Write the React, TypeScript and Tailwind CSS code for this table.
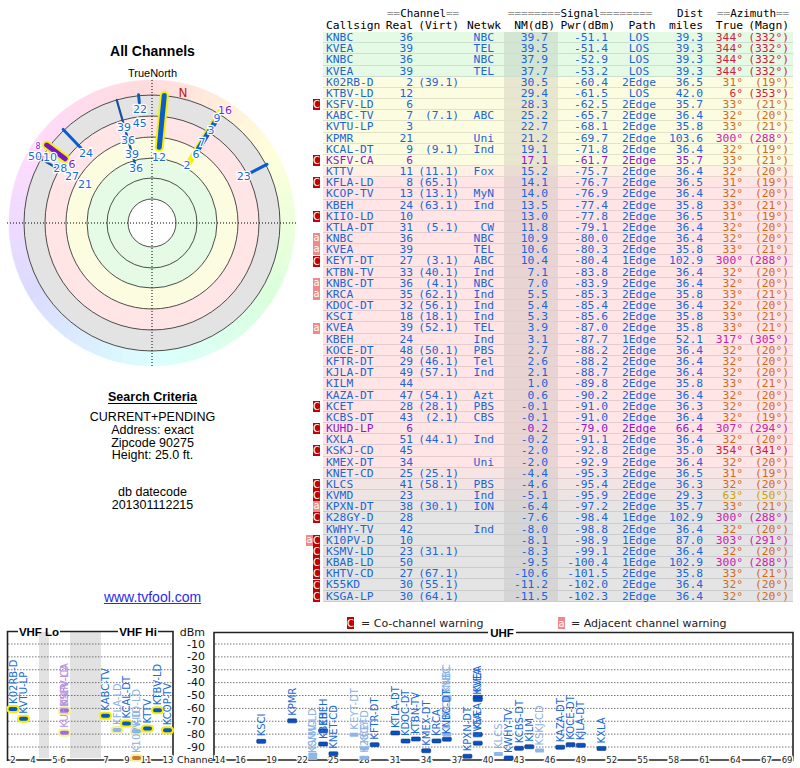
import React from "react";

// one line per station: badge|call|real|virt|netwk|nm|pwr|path|dist|true|magn|flag
const raw = [
  "|KNBC|36||NBC|39.7|-51.1|LOS|39.3|344|332",
  "|KVEA|39||TEL|39.5|-51.4|LOS|39.3|344|332",
  "|KNBC|36||NBC|37.9|-52.9|LOS|39.3|344|332",
  "|KVEA|39||TEL|37.7|-53.2|LOS|39.3|344|332",
  "|K02RB-D|2|(39.1)||30.5|-60.4|2Edge|36.5|31|19",
  "|KTBV-LD|12|||29.4|-61.5|LOS|42.0|6|353",
  "C|KSFV-LD|6|||28.3|-62.5|2Edge|35.7|33|21",
  "|KABC-TV|7|(7.1)|ABC|25.2|-65.7|2Edge|36.4|32|20",
  "|KVTU-LP|3|||22.7|-68.1|2Edge|35.8|33|21",
  "|KPMR|21||Uni|21.2|-69.7|2Edge|103.6|300|288",
  "|KCAL-DT|9|(9.1)|Ind|19.1|-71.8|2Edge|36.4|32|19",
  "C|KSFV-CA|6|||17.1|-61.7|2Edge|35.7|33|21|p",
  "|KTTV|11|(11.1)|Fox|15.2|-75.7|2Edge|36.4|32|20",
  "C|KFLA-LD|8|(65.1)||14.1|-76.7|2Edge|36.5|31|19",
  "|KCOP-TV|13|(13.1)|MyN|14.0|-76.9|2Edge|36.4|32|20",
  "|KBEH|24|(63.1)|Ind|13.5|-77.4|2Edge|35.8|33|21",
  "C|KIIO-LD|10|||13.0|-77.8|2Edge|36.5|31|19",
  "|KTLA-DT|31|(5.1)|CW|11.8|-79.1|2Edge|36.4|32|20",
  "a|KNBC|36||NBC|10.9|-80.0|2Edge|36.4|32|20",
  "a|KVEA|39||TEL|10.6|-80.3|2Edge|35.8|33|21",
  "C|KEYT-DT|27|(3.1)|ABC|10.4|-80.4|1Edge|102.9|300|288",
  "|KTBN-TV|33|(40.1)|Ind|7.1|-83.8|2Edge|36.4|32|20",
  "a|KNBC-DT|36|(4.1)|NBC|7.0|-83.9|2Edge|36.4|32|20",
  "a|KRCA|35|(62.1)|Ind|5.5|-85.3|2Edge|35.8|33|21",
  "|KDOC-DT|32|(56.1)|Ind|5.4|-85.4|2Edge|36.4|32|20",
  "|KSCI|18|(18.1)|Ind|5.3|-85.6|2Edge|35.8|33|21",
  "a|KVEA|39|(52.1)|TEL|3.9|-87.0|2Edge|35.8|33|21",
  "|KBEH|24||Ind|3.1|-87.7|1Edge|52.1|317|305",
  "|KOCE-DT|48|(50.1)|PBS|2.7|-88.2|2Edge|36.4|32|20",
  "|KFTR-DT|29|(46.1)|Tel|2.6|-88.2|2Edge|36.4|32|20",
  "|KJLA-DT|49|(57.1)|Ind|2.1|-88.7|2Edge|36.4|32|20",
  "|KILM|44|||1.0|-89.8|2Edge|35.8|33|21",
  "|KAZA-DT|47|(54.1)|Azt|0.6|-90.2|2Edge|36.4|32|20",
  "C|KCET|28|(28.1)|PBS|-0.1|-91.0|2Edge|36.3|32|20",
  "|KCBS-DT|43|(2.1)|CBS|-0.1|-91.0|2Edge|36.4|32|19",
  "C|KUHD-LP|6|||-0.2|-79.0|2Edge|66.4|307|294|p",
  "|KXLA|51|(44.1)|Ind|-0.2|-91.1|2Edge|36.4|32|20",
  "C|KSKJ-CD|45|||-2.0|-92.8|2Edge|35.0|354|341",
  "|KMEX-DT|34||Uni|-2.0|-92.9|2Edge|36.4|32|20",
  "|KNET-CD|25|(25.1)||-4.4|-95.3|2Edge|36.5|31|19",
  "C|KLCS|41|(58.1)|PBS|-4.6|-95.4|2Edge|36.3|32|20",
  "C|KVMD|23||Ind|-5.1|-95.9|2Edge|29.3|63|50",
  "a|KPXN-DT|38|(30.1)|ION|-6.4|-97.2|2Edge|35.7|33|21",
  "C|K28GY-D|28|||-7.6|-98.4|1Edge|102.9|300|288",
  "|KWHY-TV|42||Ind|-8.0|-98.8|2Edge|36.4|32|20",
  "aC|K10PV-D|10|||-8.1|-98.9|1Edge|87.0|303|291",
  "C|KSMV-LD|23|(31.1)||-8.3|-99.1|2Edge|36.4|32|20",
  "C|KBAB-LD|50|||-9.5|-100.4|1Edge|102.9|300|288",
  "C|KHTV-CD|27|(67.1)||-10.6|-101.5|2Edge|35.8|33|21",
  "C|K55KD|30|(55.1)||-11.2|-102.0|2Edge|36.4|32|20",
  "C|KSGA-LP|30|(64.1)||-11.5|-102.3|2Edge|36.4|32|20",
];

const rows = raw.map((s) => {
  const [badge, call, real, virt, net, nm, pwr, path, dist, tru, magn, flag] = s.split("|");
  return { badge, call, real, virt, net, nm, pwr, path, dist, tru: Number(tru), magn, purple: flag === "p" };
});

const rowBg = (nm: number) => {
  if (nm >= 35) return { row: "bg-[#e5fae5]", col: "bg-[#d3e6d3]" };
  if (nm >= 16) return { row: "bg-[#fcfce0]", col: "bg-[#e9e6cf]" };
  if (nm >= 15) return { row: "bg-[#fff0e5]", col: "bg-[#eadcd3]" };
  if (nm >= -3) return { row: "bg-[#ffe5e5]", col: "bg-[#e9d4d4]" };
  if (nm >= -4.5) return { row: "bg-[#f7e4e4]", col: "bg-[#e3d4d4]" };
  if (nm >= -4.8) return { row: "bg-[#f3e4e4]", col: "bg-[#e0d4d4]" };
  if (nm >= -5.5) return { row: "bg-[#eee4e4]", col: "bg-[#dcd4d4]" };
  if (nm >= -7) return { row: "bg-[#e9e4e4]", col: "bg-[#d9d4d4]" };
  return { row: "bg-[#e4e4e4]", col: "bg-[#d5d5d5]" };
};

const azColor = (az: number) => {
  if (az >= 340 || az <= 10) return "text-[#d41a3c]";
  if (az < 45) return "text-[#d2691e]";
  if (az < 90) return "text-[#c9a400]";
  return "text-[#cc22aa]";
};

// polar chart
const CX = 152;
const CY = 143;
const rad = (a: number) => (a * Math.PI) / 180;
const P = (a: number, r: number) => ({ x: CX + r * Math.sin(rad(a)), y: CY - r * Math.cos(rad(a)) });

const wedge = (a0: number, a1: number, r: number) => {
  const p0 = P(a0, r);
  const p1 = P(a1, r);
  return `M${CX} ${CY} L${p0.x} ${p0.y} A${r} ${r} 0 0 1 ${p1.x} ${p1.y} Z`;
};

const bars = [
  { a: 31.5, r1: 71, r2: 134, w: 6, c: "#f5f200", halo: false },
  { a: 5.5, r1: 76, r2: 128, w: 5, c: "#0b5ccc", halo: true },
  { a: 344, r1: 62, r2: 128, w: 2.2, c: "#1b4f9c", halo: false },
  { a: 354, r1: 121, r2: 129, w: 3, c: "#0b5ccc", halo: false },
  { a: 316.5, r1: 103, r2: 129, w: 3, c: "#0b5ccc", halo: false },
  { a: 300, r1: 110, r2: 133, w: 2.5, c: "#1b4f9c", halo: false },
  { a: 306.5, r1: 108, r2: 131, w: 5, c: "#7a14cc", halo: true },
  { a: 63, r1: 111, r2: 129, w: 3.2, c: "#0b5ccc", halo: false },
  { a: 32, r1: 88, r2: 126, w: 5, c: "#0b5ccc", halo: false },
];

const polarLabels: [string, number, number, string, number][] = [
  ["12", 6, 66, "#1a6ad8", 11],
  ["39", 343.7, 100, "#1a6ad8", 11],
  ["36", 343.8, 86.4, "#1a6ad8", 11],
  ["39", 343.6, 71, "#1a6ad8", 11],
  ["36", 343.8, 57, "#1a6ad8", 11],
  ["22", 354, 114.6, "#1a6ad8", 11],
  ["45", 353, 100.7, "#1a6ad8", 11],
  ["24", 316.3, 95.5, "#1a6ad8", 11],
  ["8", 303.7, 137, "#8a16d6", 8],
  ["50", 299.8, 134.8, "#1a6ad8", 11],
  ["10", 302.9, 121.5, "#1a6ad8", 11],
  ["28", 300.9, 107, "#1a6ad8", 11],
  ["6", 306, 98.8, "#8a16d6", 11],
  ["27", 299.9, 92.3, "#1a6ad8", 11],
  ["21", 299.6, 77, "#1a6ad8", 11],
  ["23", 62.9, 103, "#1a6ad8", 11],
  ["16", 32.9, 134.5, "#8a16d6", 11],
  ["9", 31.8, 123.5, "#1a6ad8", 11],
  ["3", 32.4, 110, "#1a6ad8", 11],
  ["7", 31.7, 95, "#1a6ad8", 11],
  ["6", 32.9, 81, "#1a6ad8", 11],
  ["2", 31.1, 67.7, "#1a6ad8", 11],
];

const Polar = () => (
  <svg width={305} height={290} className="block">
    {Array.from({ length: 72 }, (_, i) => (
      <path
        key={i}
        d={wedge(i * 5 - 2.5, i * 5 + 2.5, 143)}
        fill={`hsl(${i * 5},100%,93%)`}
        stroke={`hsl(${i * 5},100%,93%)`}
        strokeWidth={0.6}
      />
    ))}
    <circle cx={CX} cy={CY} r={128} fill="#e3e3e3" />
    <circle cx={CX} cy={CY} r={107} fill="#ffe5e5" />
    <circle cx={CX} cy={CY} r={86} fill="#fcfce0" />
    <circle cx={CX} cy={CY} r={65} fill="#e5fbe5" />
    <circle cx={CX} cy={CY} r={24} fill="#ffffff" />
    {[24, 45, 65, 86, 107, 128].map((r) => (
      <circle key={r} cx={CX} cy={CY} r={r} fill="none" stroke="#3a3a3a" strokeWidth={0.9} />
    ))}
    <line x1={CX} y1={0} x2={CX} y2={CY + 144} stroke="#000" strokeWidth={1} strokeDasharray="1 2" />
    <line x1={7} y1={CY} x2={297} y2={CY} stroke="#000" strokeWidth={1} strokeDasharray="1 2" />
    {bars.map((b, i) => {
      const p1 = P(b.a, b.r1);
      const p2 = P(b.a, b.r2);
      return (
        <g key={i}>
          {b.halo && (
            <line x1={p1.x} y1={p1.y} x2={p2.x} y2={p2.y} stroke="#f5f200" strokeWidth={b.w + 4} strokeLinecap="round" />
          )}
          <line x1={p1.x} y1={p1.y} x2={p2.x} y2={p2.y} stroke={b.c} strokeWidth={b.w} strokeLinecap="round" />
        </g>
      );
    })}
    {(() => {
      const n = P(13.4, 133.6);
      return (
        <text x={n.x} y={n.y} fill="#d01010" fontSize={12} fontFamily="DejaVu Sans" textAnchor="middle" dominantBaseline="central">
          N
        </text>
      );
    })()}
    {polarLabels.map(([t, a, r, c, fs], i) => {
      const p = P(a, r);
      return (
        <text
          key={i}
          x={p.x}
          y={p.y}
          fill={c}
          fontSize={fs}
          fontFamily="DejaVu Sans"
          textAnchor="middle"
          dominantBaseline="central"
          stroke="#ffffff"
          strokeWidth={2.5}
          paintOrder="stroke"
        >
          {t}
        </text>
      );
    })}
  </svg>
);

// bottom charts, drawn in page coordinates
const yOf = (d: number) => 644 + (-10 - d) * 1.2875;
const ux = (c: number) => 220 + (c - 14) * 10.31;

const vhf: [number, number, string, string][] = [
  [13, -60.4, "K02RB-D", "blue"],
  [23.5, -68.1, "KVTU-LP", "blue"],
  [64.5, -62.5, "KSFV-LD", "purple"],
  [64.5, -61.7, "KSFV-CA", "purple"],
  [64.5, -79.0, "KUHD-LP", "purple"],
  [105.5, -65.7, "KABC-TV", "blue"],
  [117, -76.7, "KFLA-LD", "light"],
  [126.5, -71.8, "KCAL-DT", "blue"],
  [136.5, -77.8, "KIIO-LD", "light"],
  [136.5, -98.9, "K10PV-D", "orange"],
  [147.5, -75.7, "KTTV", "blue"],
  [157.5, -61.5, "KTBV-LD", "blue"],
  [167.5, -76.9, "KCOP-TV", "blue"],
];

const uhf: [number, number, string, boolean][] = [
  [18, -85.6, "KSCI", false],
  [21, -69.7, "KPMR", false],
  [23, -95.9, "KVMD", true],
  [23, -99.1, "KSMV-LD", true],
  [24, -77.4, "KBEH", false],
  [24, -87.7, "KBEH", false],
  [25, -95.3, "KNET-CD", false],
  [27, -80.4, "KEYT-DT", true],
  [28, -91.0, "KCET", true],
  [28, -98.4, "K28GY-D", true],
  [29, -88.2, "KFTR-DT", false],
  [31, -79.1, "KTLA-DT", false],
  [32, -85.4, "KDOC-DT", false],
  [33, -83.8, "KTBN-TV", false],
  [34, -92.9, "KMEX-DT", false],
  [35, -85.3, "KRCA", false],
  [36, -51.1, "KNBC", true],
  [36, -52.9, "KNBC", true],
  [36, -80.0, "KNBC", true],
  [36, -83.9, "KNBC-DT", false],
  [38, -97.2, "KPXN-DT", false],
  [39, -51.4, "KVEA", false],
  [39, -53.2, "KVEA", false],
  [39, -80.3, "KVEA", false],
  [39, -87.0, "KVEA", false],
  [41, -95.4, "KLCS", true],
  [42, -98.8, "KWHY-TV", false],
  [43, -91.0, "KCBS-DT", false],
  [44, -89.8, "KILM", false],
  [45, -92.8, "KSKJ-CD", true],
  [47, -90.2, "KAZA-DT", false],
  [48, -88.2, "KOCE-DT", false],
  [49, -88.7, "KJLA-DT", false],
  [51, -91.1, "KXLA", false],
];

const vhfTicks: [string, number][] = [
  ["2", 13], ["4", 33], ["5", 55], ["6", 63], ["7", 106], ["9", 127], ["11", 146], ["13", 168],
];
const uhfTicks = [14, 16, 19, 22, 25, 28, 31, 34, 37, 40, 43, 46, 49, 52, 55, 58, 61, 64, 67, 69];

const labelFill: Record<string, string> = {
  blue: "#1a6ad8",
  light: "#8ab2e4",
  purple: "#b894e0",
  orange: "#8ab2e4",
};
const pillFill: Record<string, string> = {
  blue: "#0a55c8",
  light: "#8eb6e6",
  purple: "#a070d0",
  orange: "#c87830",
};

const Charts = () => (
  <svg width={800} height={153} viewBox="0 615 800 153" className="block" fontFamily="DejaVu Sans">
    {/* legend */}
    <rect x={347} y={617} width={7} height={12} fill="#c40000" />
    <text x={350.5} y={623.5} fill="#fff" fontSize={10} textAnchor="middle" dominantBaseline="central">C</text>
    <text x={361} y={623.5} fill="#222" fontSize={11} dominantBaseline="central">= Co-channel warning</text>
    <rect x={558} y={617} width={7} height={12} fill="#f08a8a" />
    <text x={561.5} y={623} fill="#fff" fontSize={10} textAnchor="middle" dominantBaseline="central">a</text>
    <text x={571} y={623.5} fill="#222" fontSize={11} dominantBaseline="central">= Adjacent channel warning</text>

    {/* grey gaps */}
    <rect x={39} y={632} width={10} height={126} fill="#e2e2e2" />
    <rect x={70} y={632} width={31} height={126} fill="#e2e2e2" />

    {/* grid */}
    {Array.from({ length: 9 }, (_, i) => {
      const y = yOf(-10 * (i + 1));
      return (
        <g key={i}>
          <line x1={8} y1={y} x2={172} y2={y} stroke="#555" strokeWidth={0.8} strokeDasharray="1.5 1.5" />
          <line x1={215} y1={y} x2={792} y2={y} stroke="#555" strokeWidth={0.8} strokeDasharray="1.5 1.5" />
          <text x={205} y={y} fontSize={11} fill="#111" textAnchor="end" dominantBaseline="central">
            {`-${(i + 1) * 10}`}
          </text>
        </g>
      );
    })}
    <text x={205} y={632} fontSize={11} fill="#111" textAnchor="end" dominantBaseline="central">dBm</text>
    <text x={177} y={759.5} fontSize={9.5} fill="#111" dominantBaseline="central">Channel</text>

    {/* frames */}
    <path d="M18 631.5 H7.5 V761" fill="none" stroke="#222" strokeWidth={1.6} />
    <path d="M60 631.5 H118" fill="none" stroke="#222" strokeWidth={1.6} />
    <path d="M158 631.5 H173 V761" fill="none" stroke="#222" strokeWidth={1.6} />
    <line x1={7} y1={760} x2={173} y2={760} stroke="#222" strokeWidth={1.4} />
    <text x={39} y={632} fontSize={11.5} fontWeight="bold" fontFamily="Liberation Sans" textAnchor="middle" dominantBaseline="central">VHF Lo</text>
    <text x={138} y={632} fontSize={11.5} fontWeight="bold" fontFamily="Liberation Sans" textAnchor="middle" dominantBaseline="central">VHF Hi</text>

    <path d="M214 761 V632.5 H488" fill="none" stroke="#222" strokeWidth={1.6} />
    <path d="M516 632.5 H793 V761" fill="none" stroke="#222" strokeWidth={1.6} />
    <line x1={214} y1={760} x2={793} y2={760} stroke="#222" strokeWidth={1.4} />
    <text x={502} y={633} fontSize={11.5} fontWeight="bold" fontFamily="Liberation Sans" textAnchor="middle" dominantBaseline="central">UHF</text>

    {/* axis ticks */}
    {vhfTicks.map(([t, x]) => (
      <text key={t} x={x} y={760} fontSize={8.5} fill="#222" textAnchor="middle" dominantBaseline="central" stroke="#fff" strokeWidth={3} paintOrder="stroke">
        {t}
      </text>
    ))}
    {uhfTicks.map((c) => (
      <text key={c} x={ux(c)} y={760} fontSize={8.5} fill="#222" textAnchor="middle" dominantBaseline="central" stroke="#fff" strokeWidth={3} paintOrder="stroke">
        {c}
      </text>
    ))}

    {/* vhf stations */}
    {vhf.map(([x, d, name, kind], i) => {
      const y = Math.min(yOf(d), 758);
      return (
        <g key={i}>
          <text x={x + 3.6} y={y - 5} fontSize={10} fill={labelFill[kind]} transform={`rotate(-90 ${x + 3.6} ${y - 5})`}>
            {name}
          </text>
          <rect x={x - 5.5} y={y - 3} width={11} height={6} rx={3} fill={pillFill[kind]} stroke={kind === "blue" ? "#f4ef00" : "#f4f0a0"} strokeWidth={2} />
        </g>
      );
    })}

    {/* uhf stations */}
    {uhf.map(([c, d, name, light], i) => {
      const x = ux(c);
      const y = Math.min(yOf(d), 758);
      return (
        <g key={i}>
          <text x={x + 3.6} y={y - 5} fontSize={10} fill={light ? "#8ab2e4" : "#1a6ad8"} transform={`rotate(-90 ${x + 3.6} ${y - 5})`}>
            {name}
          </text>
          <rect x={x - 4.5} y={y - 2} width={9} height={4} rx={1} fill={light ? "#8eb6e6" : "#0a50c0"} stroke={light ? "none" : "#07357f"} strokeWidth={0.6} />
        </g>
      );
    })}
  </svg>
);

const Badge = ({ k }: { k: string }) =>
  k === "C" ? (
    <span className="w-[7px] h-[11px] bg-[#c40000] text-white text-[10px] leading-[11px] text-center font-['DejaVu_Sans',sans-serif]">C</span>
  ) : (
    <span className="w-[7px] h-[11px] bg-[#f08a8a] text-white text-[10px] leading-[10px] text-center font-['DejaVu_Sans',sans-serif]">a</span>
  );

const App = () => {
  return (
    <div className="w-[800px] h-[768px] bg-white overflow-hidden text-black">
      <div className="flex h-[615px]">
        <div className="w-[305px] flex flex-col items-center font-['Liberation_Sans',Arial,sans-serif]">
          <div className="pt-[43px] text-[14px] leading-[16px] font-bold">All Channels</div>
          <div className="mt-[8px] text-[11px] leading-[13px]">TrueNorth</div>
          <Polar />
          <div className="mt-[20px] text-[12.5px] leading-[15px] font-bold underline underline-offset-2">Search Criteria</div>
          <div className="mt-[6px] text-[12.5px] leading-[12.8px] text-center">
            <div>CURRENT+PENDING</div>
            <div>Address: exact</div>
            <div>Zipcode 90275</div>
            <div>Height: 25.0 ft.</div>
          </div>
          <div className="mt-[24px] text-[12.5px] leading-[12.8px] text-center">
            <div>db datecode</div>
            <div>201301112215</div>
          </div>
          <a className="mt-[77px] text-[14px] leading-[16px] text-[#2a2aee] underline">www.tvfool.com</a>
        </div>

        <div className="w-[488px] font-['DejaVu_Sans_Mono',monospace] text-[11.3px] whitespace-nowrap">
          <div className="pt-[8px] pl-[18px]">
            <div className="flex h-[11px] leading-[11px] text-[10.9px]">
              <span className="w-[64px]" />
              <span className="w-[72px]">
                <span className="text-[#9a9a9a]">==</span>Channel<span className="text-[#9a9a9a]">==</span>
              </span>
              <span className="w-[49px]" />
              <span className="w-[146px]">
                <span className="text-[#9a9a9a]">========</span>Signal<span className="text-[#9a9a9a]">========</span>
              </span>
              <span className="w-[23px]" />
              <span className="w-[26px] text-right">Dist</span>
              <span className="w-[14px]" />
              <span className="w-[72px]">
                <span className="text-[#9a9a9a]">==</span>Azimuth<span className="text-[#9a9a9a]">==</span>
              </span>
            </div>
            <div className="flex h-[12px] mt-[1px] leading-[12px]">
              <span className="w-[60px] pl-[3px]">Callsign</span>
              <span className="w-[30px] text-right">Real</span>
              <span className="w-[46px] text-right">(Virt)</span>
              <span className="w-[42px] text-right">Netwk</span>
              <span className="w-[54px] text-right">NM(dB)</span>
              <span className="w-[60px] text-right">Pwr(dBm)</span>
              <span className="w-[54px] text-center">Path</span>
              <span className="w-[34px] text-right">miles</span>
              <span className="w-[40px] text-right">True</span>
              <span className="w-[46px] text-right">(Magn)</span>
            </div>
          </div>

          {rows.map((r, i) => {
            const bg = rowBg(Number(r.nm));
            const txt = r.purple ? "text-[#8a16d6]" : "text-[#1c64d8]";
            const az = azColor(r.tru);
            return (
              <div key={i} className="flex h-[11.18px]">
                <div className="w-[18px] flex justify-end items-center pr-[3px]">
                  {r.badge.split("").map((k, j) => (
                    <Badge key={j} k={k} />
                  ))}
                </div>
                <div className={`flex w-[470px] leading-[11px] border-b border-black/10 ${bg.row} ${txt}`}>
                  <span className="w-[64px] pl-[3px]">{r.call}</span>
                  <span className="w-[26px] text-right">{r.real}</span>
                  <span className="w-[46px] text-right">{r.virt}</span>
                  <span className="w-[35px] text-right">{r.net}</span>
                  <span className="w-[10px]" />
                  <span className={`w-[54px] text-right pr-[10px] ${bg.col}`}>{r.nm}</span>
                  <span className="w-[57px] text-right pr-[7px]">{r.pwr}</span>
                  <span className="w-[48px] text-center">{r.path}</span>
                  <span className="w-[40px] text-right">{r.dist}</span>
                  <span className={`w-[40px] text-right ${az}`}>{r.tru}°</span>
                  <span className={`w-[46px] text-right ${az}`}>({r.magn}°)</span>
                  <span className="w-[4px]" />
                </div>
              </div>
            );
          })}
        </div>
      </div>
      <Charts />
    </div>
  );
};

export default App;
